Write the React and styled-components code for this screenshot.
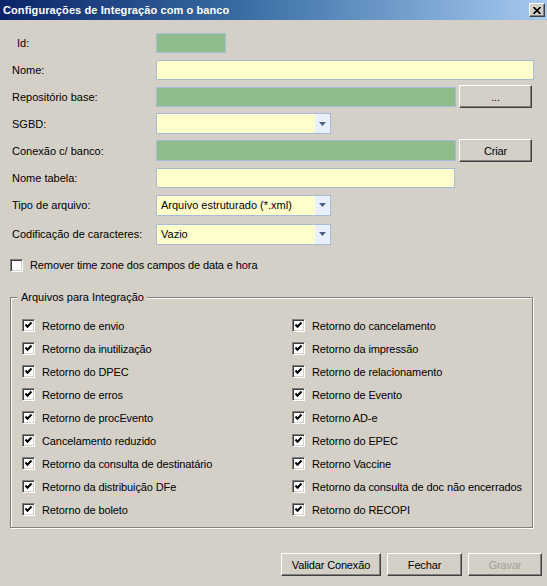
import React from "react"
import styled, { createGlobalStyle } from "styled-components"

const GlobalStyle = createGlobalStyle`
  html, body {
    margin: 0;
    padding: 0;
    background: #d4d0c8;
  }
  body {
    font-family: "Liberation Sans", Arial, sans-serif;
    font-size: 11px;
    color: #000;
  }
`

const Window = styled.div`
  width: 547px;
  height: 586px;
  background: #d4d0c8;
  overflow: hidden;
`

const TitleBar = styled.div`
  height: 20px;
  display: flex;
  align-items: center;
  justify-content: space-between;
  padding: 0 2px 0 3px;
  background: linear-gradient(to right, #0a246a 0%, #3a6ea5 45%, #a6caf0 100%);
`

const Title = styled.span`
  color: #fff;
  font-weight: bold;
  font-size: 11px;
  letter-spacing: 0.1px;
`

const CloseButton = styled.div`
  width: 16px;
  height: 14px;
  box-sizing: border-box;
  background: #d4d0c8;
  border: 1px solid;
  border-color: #fff #404040 #404040 #fff;
  box-shadow: inset -1px -1px 0 #808080;
  display: flex;
  align-items: center;
  justify-content: center;
`

const Form = styled.div`
  padding: 10px 0 0 12px;
`

const Row = styled.div`
  height: ${p => p.$h}px;
  display: flex;
  align-items: center;
`

const Label = styled.span`
  width: ${p => 144 - (p.$indent || 0)}px;
  padding-left: ${p => p.$indent || 0}px;
  flex-shrink: 0;
`

const Field = styled.div`
  width: ${p => p.$w}px;
  height: ${p => p.$h || 20}px;
  box-sizing: border-box;
  border: 1px solid #a4bcd8;
  background: ${p => (p.$tone === "green" ? "#8fbc8b" : "#ffffcc")};
`

const Combo = styled.div`
  width: 175px;
  height: 21px;
  box-sizing: border-box;
  border: 1px solid #a4bcd8;
  background: #ffffcc;
  display: flex;
  align-items: center;
`

const ComboValue = styled.span`
  flex: 1;
  padding-left: 4px;
  font-size: 11px;
`

const ComboArrow = styled.div`
  width: 15px;
  height: 100%;
  background: #e8f0fb;
  display: flex;
  align-items: center;
  justify-content: center;
`

const Button = styled.div`
  width: ${p => p.$w}px;
  height: 23px;
  box-sizing: border-box;
  margin-left: ${p => p.$ml || 0}px;
  background: #d4d0c8;
  border: 1px solid;
  border-color: #fff #404040 #404040 #fff;
  box-shadow: inset -1px -1px 0 #808080;
  display: flex;
  align-items: center;
  justify-content: center;
  font-size: 11px;
  letter-spacing: -0.15px;
  color: ${p => (p.$disabled ? "#a19f99" : "#000")};
`

const CheckLine = styled.label`
  display: flex;
  align-items: center;
  height: ${p => p.$h || 23}px;
  padding-left: ${p => p.$pl || 0}px;
  gap: 7px;
  white-space: nowrap;
  letter-spacing: -0.1px;
`

const Box = styled.span`
  width: 13px;
  height: 13px;
  box-sizing: border-box;
  flex-shrink: 0;
  background: #fff;
  border: 1px solid;
  border-color: #808080 #fff #fff #808080;
  box-shadow: inset 1px 1px 0 #404040, inset -1px -1px 0 #d4d0c8;
  display: flex;
  align-items: center;
  justify-content: center;
`

const GroupBox = styled.div`
  position: relative;
  margin: 16px 0 0 10px;
  width: 523px;
  box-sizing: border-box;
  border: 1px solid #808080;
  box-shadow: 1px 1px 0 #fff, inset 1px 1px 0 #fff;
  padding: 16px 0 6px 11px;
`

const Legend = styled.span`
  position: absolute;
  top: -7px;
  left: 6px;
  padding: 0 3px 0 4px;
  background: #d4d0c8;
  line-height: 13px;
`

const CheckGrid = styled.div`
  display: grid;
  grid-template-columns: 270px 1fr;
  grid-auto-flow: column;
  grid-template-rows: repeat(9, 23px);
`

const Footer = styled.div`
  display: flex;
  justify-content: flex-end;
  gap: 6px;
  margin-top: 25px;
  padding-right: 5px;
`

const Check = ({ checked }) => (
  <Box>
    {checked && (
      <svg width="9" height="9" viewBox="0 0 9 9">
        <path d="M1.5 3.5 L3.5 5.8 L7.5 1.5" fill="none" stroke="#000" strokeWidth="2" />
      </svg>
    )}
  </Box>
)

const Arrow = () => (
  <svg width="7" height="4" viewBox="0 0 7 4">
    <path d="M0 0 H7 L3.5 4 Z" fill="#4d6185" />
  </svg>
)

const left = [
  "Retorno de envio",
  "Retorno da inutilização",
  "Retorno do DPEC",
  "Retorno de erros",
  "Retorno de procEvento",
  "Cancelamento reduzido",
  "Retorno da consulta de destinatário",
  "Retorno da distribuição DFe",
  "Retorno de boleto",
]

const right = [
  "Retorno do cancelamento",
  "Retorno da impressão",
  "Retorno de relacionamento",
  "Retorno de Evento",
  "Retorno AD-e",
  "Retorno do EPEC",
  "Retorno Vaccine",
  "Retorno da consulta de doc não encerrados",
  "Retorno do RECOPI",
]

const App = () => {
  return (
    <Window>
      <GlobalStyle />
      <TitleBar>
        <Title>Configurações de Integração com o banco</Title>
        <CloseButton>
          <svg width="8" height="7" viewBox="0 0 8 7">
            <path d="M0.5 0 L7.5 7 M7.5 0 L0.5 7" stroke="#000" strokeWidth="1.6" />
          </svg>
        </CloseButton>
      </TitleBar>

      <Form>
        <Row $h={26}>
          <Label $indent={5}>Id:</Label>
          <Field $tone="green" $w={70} />
        </Row>
        <Row $h={27}>
          <Label>Nome:</Label>
          <Field $w={378} />
        </Row>
        <Row $h={27}>
          <Label>Repositório base:</Label>
          <Field $tone="green" $w={300} />
          <Button $w={73} $ml={3}>...</Button>
        </Row>
        <Row $h={27}>
          <Label>SGBD:</Label>
          <Combo>
            <ComboValue />
            <ComboArrow><Arrow /></ComboArrow>
          </Combo>
        </Row>
        <Row $h={27}>
          <Label>Conexão c/ banco:</Label>
          <Field $tone="green" $w={300} $h={21} />
          <Button $w={73} $ml={3}>Criar</Button>
        </Row>
        <Row $h={27}>
          <Label>Nome tabela:</Label>
          <Field $w={299} />
        </Row>
        <Row $h={28}>
          <Label>Tipo de arquivo:</Label>
          <Combo>
            <ComboValue>Arquivo estruturado (*.xml)</ComboValue>
            <ComboArrow><Arrow /></ComboArrow>
          </Combo>
        </Row>
        <Row $h={30}>
          <Label>Codificação de caracteres:</Label>
          <Combo>
            <ComboValue>Vazio</ComboValue>
            <ComboArrow><Arrow /></ComboArrow>
          </Combo>
        </Row>
      </Form>

      <CheckLine $h={32} $pl={10}>
        <Check />
        Remover time zone dos campos de data e hora
      </CheckLine>

      <GroupBox>
        <Legend>Arquivos para Integração</Legend>
        <CheckGrid>
          {left.map(t => (
            <CheckLine key={t}>
              <Check checked />
              {t}
            </CheckLine>
          ))}
          {right.map(t => (
            <CheckLine key={t}>
              <Check checked />
              {t}
            </CheckLine>
          ))}
        </CheckGrid>
      </GroupBox>

      <Footer>
        <Button $w={100}>Validar Conexão</Button>
        <Button $w={75}>Fechar</Button>
        <Button $w={74} $disabled>Gravar</Button>
      </Footer>
    </Window>
  )
}

export default App
